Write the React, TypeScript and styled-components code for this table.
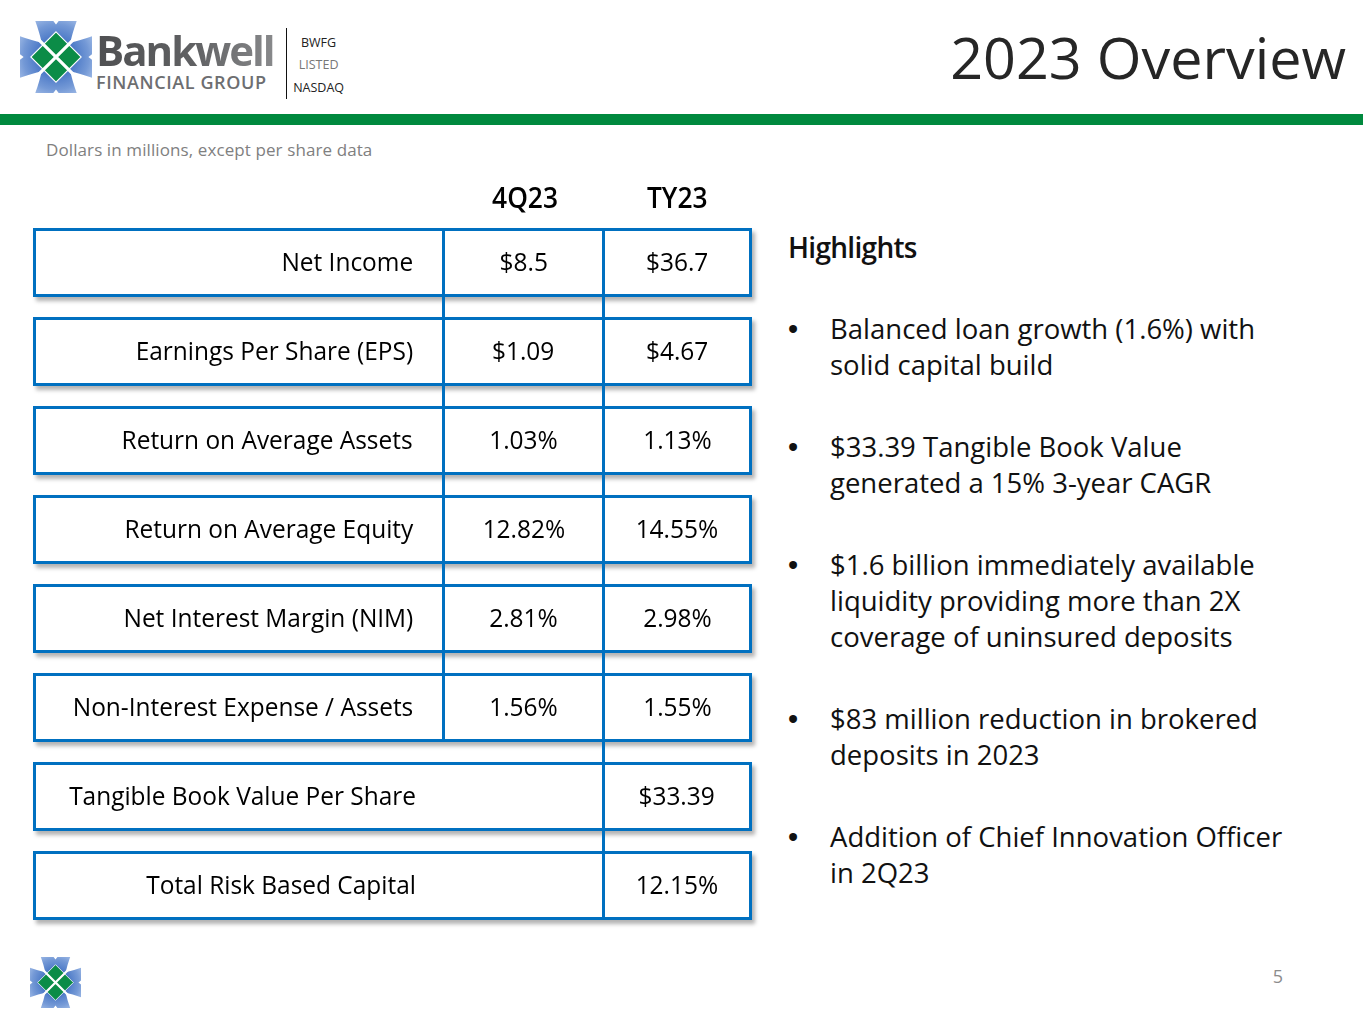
import styled, {createGlobalStyle} from "styled-components";

const GlobalStyle = createGlobalStyle`
  body {
    margin: 0;
    background: #fff;
  }
`

const BLUE = '#0070c0'

type Metric = {
  label: string
  quarter?: string
  year: string
  merged?: boolean
}

const metrics: Metric[] = [
  {label: 'Net Income', quarter: '$8.5', year: '$36.7'},
  {label: 'Earnings Per Share (EPS)', quarter: '$1.09', year: '$4.67'},
  {label: 'Return on Average Assets', quarter: '1.03%', year: '1.13%'},
  {label: 'Return on Average Equity', quarter: '12.82%', year: '14.55%'},
  {label: 'Net Interest Margin (NIM)', quarter: '2.81%', year: '2.98%'},
  {label: 'Non-Interest Expense / Assets', quarter: '1.56%', year: '1.55%'},
  {label: 'Tangible Book Value Per Share', year: '$33.39', merged: true},
  {label: 'Total Risk Based Capital', year: '12.15%', merged: true},
]

const highlights = [
  ['Balanced loan growth (1.6%) with', 'solid capital build'],
  ['$33.39 Tangible Book Value', 'generated a 15% 3-year CAGR'],
  ['$1.6 billion immediately available', 'liquidity providing more than 2X', 'coverage of uninsured deposits'],
  ['$83 million reduction in brokered', 'deposits in 2023'],
  ['Addition of Chief Innovation Officer', 'in 2Q23'],
]

const Page = styled.div`
  width: 1365px;
  height: 1024px;
  display: flex;
  flex-direction: column;
  font-family: "Open Sans", "Noto Sans", sans-serif;
  color: #0d0d0d;
  overflow: hidden;
`
const Header = styled.header`
  height: 114px;
  display: flex;
  align-items: center;
  justify-content: space-between;
  padding: 0 19px 0 20px;
  box-sizing: border-box;
`
const Brand = styled.div`
  display: flex;
  align-items: center;
`
const Wordmark = styled.div`
  display: flex;
  flex-direction: column;
  margin: 6px 0 0 4px;
`
const BrandName = styled.span`
  font-size: 42px;
  font-weight: 700;
  letter-spacing: -2px;
  line-height: 44px;
  background: linear-gradient(90deg, #4f5052 0%, #606163 55%, #88898b 100%);
  -webkit-background-clip: text;
  background-clip: text;
  color: transparent;
`
const BrandSub = styled.span`
  font-size: 18px;
  font-weight: 600;
  letter-spacing: 0.6px;
  line-height: 20px;
  color: #6d6e71;
`
const Divider = styled.div`
  width: 1.5px;
  height: 71px;
  background: #111;
  margin: 12px 0 0 12px;
`
const Listing = styled.div`
  display: flex;
  flex-direction: column;
  align-items: center;
  margin: 17px 0 0 6px;
  font-size: 12.5px;
  line-height: 22.5px;
`
const ListingLine = styled.span<{ $muted?: boolean }>`
  color: ${props => props.$muted ? '#777' : '#222'};
`
const Title = styled.h1`
  margin: 0;
  font-size: 57.5px;
  font-weight: 400;
  line-height: 70px;
  color: #262626;
`
const GreenBar = styled.div`
  height: 11px;
  background: #00893e;
  margin-right: 2px;
`
const Caption = styled.p`
  margin: 15px 0 0 46px;
  font-size: 17px;
  letter-spacing: 0.1px;
  line-height: 20px;
  color: #808080;
`
const Main = styled.main`
  display: flex;
  margin-top: 12px;
`
const TableBlock = styled.section`
  margin-left: 33px;
  width: 719px;
`
const Grid = styled.div`
  display: grid;
  grid-template-columns: 409px 160px 1fr;
`
const HeadRow = styled(Grid)`
  height: 50px;
  padding: 0 3px;
  align-items: center;
  margin-bottom: 6px;
`
const HeadCell = styled.div`
  text-align: center;
  font-size: 28px;
  font-weight: 600;
  color: #000;
`
const Row = styled(Grid)`
  height: 69px;
  box-sizing: border-box;
  border: 3px solid ${BLUE};
  background: #fff;
  box-shadow: 3px 4px 4px rgba(0, 0, 0, 0.3);
`
const Cell = styled.div<{ $divider?: boolean, $label?: boolean }>`
  display: flex;
  align-items: center;
  justify-content: ${props => props.$label ? 'flex-end' : 'center'};
  padding-right: ${props => props.$label ? '29px' : '0'};
  padding-bottom: 3px;
  border-right: ${props => props.$divider ? `3px solid ${BLUE}` : 'none'};
  font-size: 26px;
  color: #000;
  white-space: nowrap;
`
const Narrow = styled.span<{ $origin: string, $scale?: number }>`
  display: inline-block;
  transform: scaleX(${props => props.$scale ?? 0.94});
  transform-origin: ${props => props.$origin} center;
`
const Connector = styled(Grid)`
  height: 20px;
  padding: 0 3px;
`
const Link = styled.div<{ $on?: boolean }>`
  border-right: ${props => props.$on ? `3px solid ${BLUE}` : 'none'};
`
const Highlights = styled.section`
  margin-left: 36px;
  padding-top: 55px;
`
const HighlightsTitle = styled.h2`
  margin: 0;
  font-size: 28px;
  font-weight: 600;
  letter-spacing: -0.7px;
  line-height: 40px;
  color: #111;
`
const BulletList = styled.ul`
  list-style: none;
  margin: 44px 0 0;
  padding: 0;
`
const Bullet = styled.li`
  display: flex;
  font-size: 27.5px;
  line-height: 36px;
  color: #111;
  white-space: nowrap;

  & + & {
    margin-top: 46px;
  }
`
const Dot = styled.span`
  flex: none;
  width: 42px;
  font-family: "Liberation Sans", Arial, sans-serif;
  font-size: 29px;
`
const Footer = styled.footer`
  margin-top: auto;
  display: flex;
  justify-content: space-between;
  align-items: flex-start;
  padding: 0 82px 16px 30px;
`
const PageNum = styled.span`
  font-size: 18px;
  line-height: 24px;
  margin-top: 7px;
  color: #8c8c8c;
`

// blue petals: the outer arms of a curved X, one on each side, split by a small notch
const PETALS =
  'M17,0 H37 L40,4 L43,0 H63 Q58,14 56,24 Q66,22 80,17 V37 L76,40 L80,43 V63 Q66,58 56,56 ' +
  'Q58,66 63,80 H43 L40,76 L37,80 H17 Q22,66 24,56 Q14,58 0,63 V43 L4,40 L0,37 V17 Q14,22 24,24 Q22,14 17,0 Z'

const Mark = ({size}: { size: number }) => (
  <svg width={size} height={size} viewBox="0 0 80 80">
    <defs>
      <radialGradient id={`petal${size}`} cx="40" cy="40" r="52" gradientUnits="userSpaceOnUse">
        <stop offset="0.3" stopColor="#3f6fc2"/>
        <stop offset="0.7" stopColor="#7499d6"/>
        <stop offset="1" stopColor="#b0c7ec"/>
      </radialGradient>
    </defs>
    <path d={PETALS} fill={`url(#petal${size})`}/>
    <polygon points="40,12 68,40 40,68 12,40" fill="#0b8c47" stroke="#fff" strokeWidth="1.2"/>
    <path d="M0,0 L80,80 M80,0 L0,80" stroke="#fff" strokeWidth="3.5"/>
  </svg>
)

const App = () => {
  return (
    <Page>
      <GlobalStyle/>
      <Header>
        <Brand>
          <Mark size={72}/>
          <Wordmark>
            <BrandName>Bankwell</BrandName>
            <BrandSub>FINANCIAL GROUP</BrandSub>
          </Wordmark>
          <Divider/>
          <Listing>
            <ListingLine>BWFG</ListingLine>
            <ListingLine $muted>LISTED</ListingLine>
            <ListingLine>NASDAQ</ListingLine>
          </Listing>
        </Brand>
        <Title>2023 Overview</Title>
      </Header>
      <GreenBar/>
      <Caption>Dollars in millions, except per share data</Caption>
      <Main>
        <TableBlock>
          <HeadRow>
            <div/>
            <HeadCell><Narrow $origin="center">4Q23</Narrow></HeadCell>
            <HeadCell><Narrow $origin="center">TY23</Narrow></HeadCell>
          </HeadRow>
          {metrics.map((m, i) => {
            const next = metrics[i + 1]
            return (
              <div key={m.label}>
                <Row>
                  <Cell $label $divider={!m.merged}><Narrow $origin="right">{m.label}</Narrow></Cell>
                  <Cell $divider><Narrow $origin="center">{m.quarter}</Narrow></Cell>
                  <Cell><Narrow $origin="center">{m.year}</Narrow></Cell>
                </Row>
                {next && (
                  <Connector>
                    <Link $on={!m.merged && !next.merged}/>
                    <Link $on/>
                    <div/>
                  </Connector>
                )}
              </div>
            )
          })}
        </TableBlock>
        <Highlights>
          <HighlightsTitle>Highlights</HighlightsTitle>
          <BulletList>
            {highlights.map(lines => (
              <Bullet key={lines[0]}>
                <Dot>•</Dot>
                <span>{lines.map((l, j) => <span key={j}>{l}{j < lines.length - 1 && <br/>}</span>)}</span>
              </Bullet>
            ))}
          </BulletList>
        </Highlights>
      </Main>
      <Footer>
        <Mark size={51}/>
        <PageNum>5</PageNum>
      </Footer>
    </Page>
  );
};

export default App;
